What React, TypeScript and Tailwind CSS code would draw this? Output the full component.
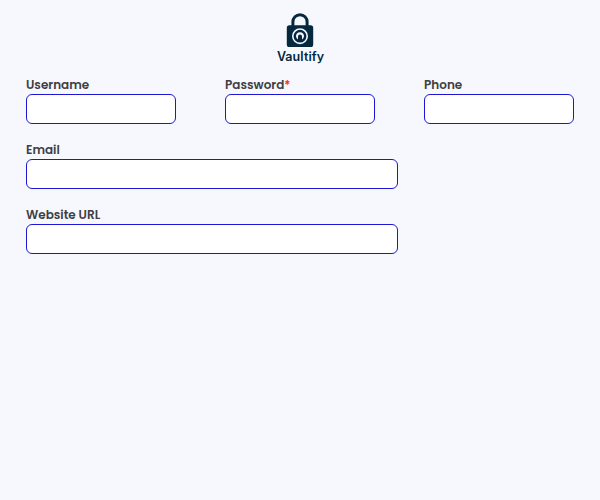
function Logo() {
  return (
    <div className="flex h-[65px] flex-col items-center pt-[13px]">
      <svg width="28" height="34" viewBox="0 0 28 34" fill="none">
        <path d="M6.9 14V8.8a7.1 7.1 0 0 1 14.2 0V14" stroke="#05283f" strokeWidth="3" />
        <rect x="0.8" y="12.2" width="26.4" height="21.8" rx="2.6" fill="#05283f" />
        <circle cx="14" cy="23.2" r="7.2" stroke="#f7f8fe" strokeWidth="1.6" />
        <path d="M12 26.6A4 4 0 1 1 16 26.6V23.6A2 2 0 0 0 12 23.6Z" fill="#f7f8fe" />
        <path d="M14 27V23.2" stroke="#05283f" strokeWidth="2" />
      </svg>
      <span className="mt-[2px] ml-px font-['Inter',sans-serif] text-[12.5px] leading-4 font-semibold tracking-[0.08px] text-[#05283f]">Vaultify</span>
    </div>
  );
}

function Field({ id, label, width, required = false }: { id: string; label: string; width: string; required?: boolean }) {
  return (
    <div className={`flex flex-col ${width}`}>
      <label htmlFor={id} className="mb-px h-[15px] text-[12px] leading-[14px] font-semibold whitespace-nowrap text-[#403f43]">
        {label}
        {required && <span className="text-[#f52929]">*</span>}
      </label>
      <input id={id} className="h-[30px] w-full rounded-md border border-[#1d16d4] bg-white px-2 text-xs outline-none" />
    </div>
  );
}

export default function App() {
  return (
    <main className="min-h-screen bg-[#f7f8fe] font-['Poppins','Inter',sans-serif]">
      <Logo />
      <form className="flex flex-col gap-[19px] px-[26px] pt-[13px]">
        <div className="flex justify-between">
          <Field id="username" label="Username" width="w-[150px]" />
          <Field id="password" label="Password" width="w-[150px]" required />
          <Field id="phone" label="Phone" width="w-[150px]" />
        </div>
        <Field id="email" label="Email" width="w-[372px]" />
        <Field id="website" label="Website URL" width="w-[372px]" />
      </form>
    </main>
  );
}
